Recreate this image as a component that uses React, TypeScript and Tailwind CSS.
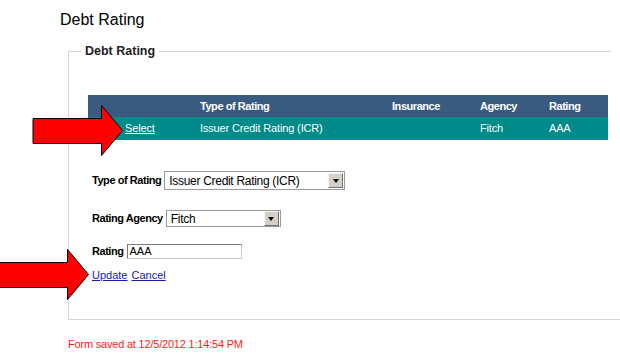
import React from "react";

const font = "font-['Liberation_Sans',Arial,sans-serif]";

const DropButton = () => (
  <div className="flex h-[15px] w-[15px] items-center justify-center border border-t-[#f4f4f4] border-l-[#f4f4f4] border-r-[#707070] border-b-[#707070] bg-[#d4d0c8]">
    <div className="h-0 w-0 border-x-[3.5px] border-t-[4px] border-x-transparent border-t-black" />
  </div>
);

const FakeSelect = ({ value, width, height }: { value: string; width: string; height: string }) => (
  <div className={`flex items-center justify-between border border-[#9a9a9a] bg-white pl-[4px] pr-px ${width} ${height}`}>
    <span className="text-[12px] tracking-[-0.3px] text-black">{value}</span>
    <DropButton />
  </div>
);

const Arrow = ({ className }: { className: string }) => (
  <svg className={`absolute ${className}`} viewBox="0 0 92 54" width="92" height="54">
    <path
      d="M1 14.5 H69.5 V1.5 L90.5 26.5 L69.5 51.5 V39.5 H1 Z"
      fill="#ff0000"
      stroke="#000"
      strokeWidth="1"
    />
  </svg>
);

export default function App() {
  return (
    <div className={`relative h-[357px] w-[620px] overflow-hidden bg-white ${font}`}>
      <h1 className="pl-[60px] pt-[10px] text-[16px] leading-[20px] text-black">Debt Rating</h1>

      <div className="ml-[68px] mt-[21px] flex h-[269px] flex-col border-b border-l border-[#d4d4d4]">
        <div className="-mt-[7px] mr-[9px] flex h-[14px] items-center">
          <div className="h-px w-[12px] bg-[#d4d4d4]" />
          <span className="px-[4px] text-[12.5px] font-bold leading-[14px] text-[#222]">Debt Rating</span>
          <div className="h-px flex-1 bg-[#d4d4d4]" />
        </div>

        <div className="ml-[19px] mr-[12px] mt-[37px] text-white">
          <div className="grid h-[22px] grid-cols-[112px_192px_88px_69px_1fr] items-center bg-[#395b80] text-[11px] font-bold tracking-[-0.45px]">
            <span />
            <span>Type of Rating</span>
            <span>Insurance</span>
            <span>Agency</span>
            <span>Rating</span>
          </div>
          <div className="grid h-[23px] grid-cols-[112px_192px_88px_69px_1fr] items-center bg-[#008a8a] text-[11px] tracking-[-0.15px]">
            <span className="pl-[37px] underline">Select</span>
            <span>Issuer Credit Rating (ICR)</span>
            <span />
            <span>Fitch</span>
            <span>AAA</span>
          </div>
        </div>

        <div className="ml-[23px] text-black">
          <div className="mt-[31px] flex items-center gap-[3px]">
            <span className="text-[11px] font-bold tracking-[-0.45px]">Type of Rating</span>
            <FakeSelect value="Issuer Credit Rating (ICR)" width="w-[181px]" height="h-[19px]" />
          </div>
          <div className="mt-[20px] flex items-center gap-[3px]">
            <span className="text-[11px] font-bold tracking-[-0.45px]">Rating Agency</span>
            <FakeSelect value="Fitch" width="w-[115px]" height="h-[17px]" />
          </div>
          <div className="mt-[16px] flex items-center gap-[3px]">
            <span className="text-[11px] font-bold tracking-[-0.45px]">Rating</span>
            <div className="flex h-[15px] w-[115px] items-center border border-t-[#7a7a7a] border-l-[#7a7a7a] border-r-[#c8c8c8] border-b-[#c8c8c8] pl-[2px] text-[11px]">
              AAA
            </div>
          </div>
          <div className="mt-[8px] flex gap-[4px] text-[11px] leading-[14px] text-[#1a1aa6]">
            <a className="underline">Update</a>
            <a className="underline">Cancel</a>
          </div>
        </div>
      </div>

      <p className="ml-[68px] mt-[17px] text-[11px] leading-[14px] tracking-[-0.2px] text-[#ff1a1a]">
        Form saved at 12/5/2012 1:14:54 PM
      </p>

      <Arrow className="left-[32px] top-[104px]" />
      <Arrow className="-left-[2px] top-[248px]" />
    </div>
  );
}
